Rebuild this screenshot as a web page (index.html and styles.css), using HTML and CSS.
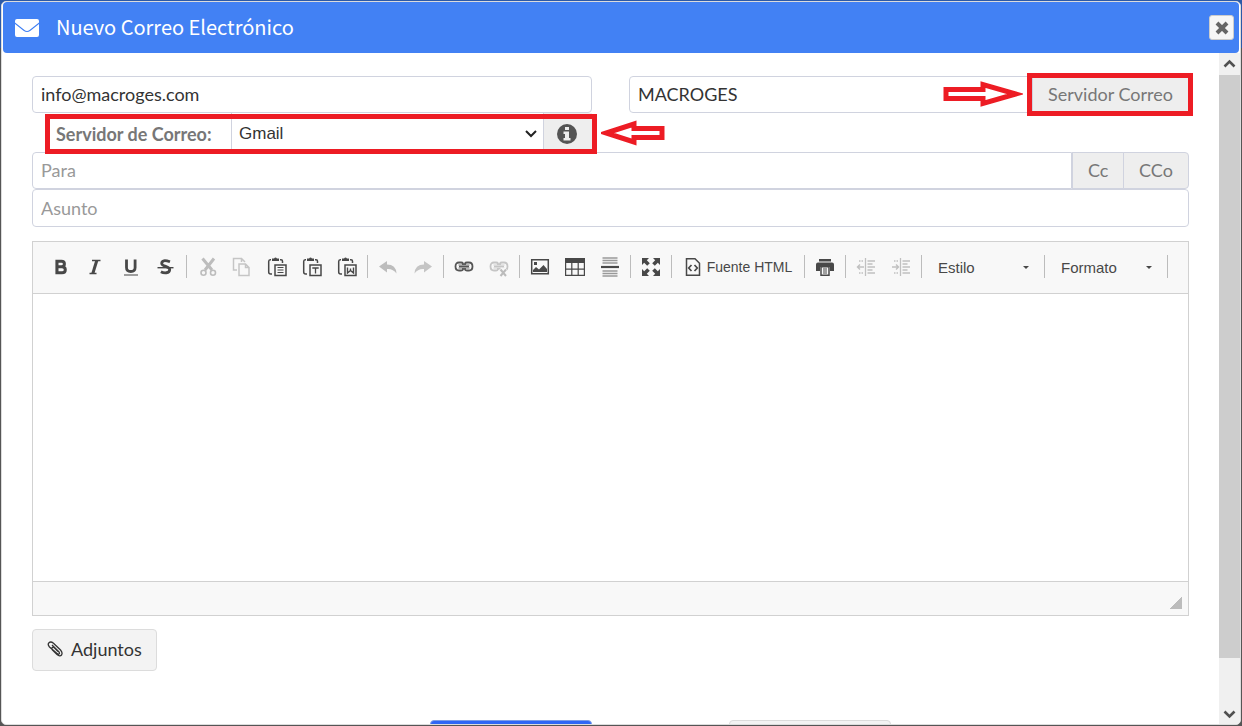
FILE: index.html
```html
<!DOCTYPE html>
<html lang="es">
<head>
<meta charset="utf-8">
<meta name="viewport" content="width=device-width, initial-scale=1">
<title>Nuevo Correo Electrónico</title>
<link rel="stylesheet" href="styles.css">
</head>
<body>
<main class="dialog">
  <header class="titlebar">
    <svg class="mail-icon" viewBox="0 0 24 20" aria-hidden="true"><path fill="#fff" d="M2 1h20q2 0 2 2v1.500L14.500 12q-2.500 1.800-5 0L0 4.500V3q0-2 2-2zM0 6l8.500 6.800q3.500 2.400 7 0L24 6v11q0 2-2 2H2q-2 0-2-2z"/></svg>
    <h1 class="title">Nuevo Correo Electrónico</h1>
    <button class="close" type="button" aria-label="Cerrar"><svg viewBox="0 0 12 12" width="14" height="14"><path d="M1.700 1.700l8.600 8.600M10.300 1.700l-8.600 8.600" stroke="#666" stroke-width="3.400"/></svg></button>
  </header>
  <div class="body">
    <form class="content">
      <div class="senders">
        <input class="field" type="text" aria-label="Remitente" value="info@macroges.com">
        <div class="group">
          <input class="field joined" type="text" aria-label="Nombre" value="MACROGES">
          <button class="addon" type="button">Servidor Correo</button>
          <span class="mark mark-button"></span>
          <svg class="arrow arrow-right" viewBox="0 0 80 28" aria-hidden="true"><path d="M3 9.500h37V4.500L73 14 40 23.500V18.500H3z"/></svg>
        </div>
        <div class="server">
          <label class="server-label" for="server">Servidor de Correo:</label>
          <div class="select-box">
            <select class="server-select" id="server"><option>Gmail</option></select>
            <svg class="chevron" viewBox="0 0 12 8" aria-hidden="true"><path d="M1 1l5 5 5-5" fill="none" stroke="#222" stroke-width="2"/></svg>
          </div>
          <button class="info" type="button" aria-label="Información"><svg viewBox="0 0 20 20" width="20" height="20"><circle cx="10" cy="10" r="10" fill="#555"/><path fill="#eee" d="M8 3h4v3H8zM6.500 7.500H12v6.500h1.500v2.500h-7V14H8v-4H6.500z"/></svg></button>
          <span class="mark mark-server"></span>
          <svg class="arrow arrow-left" viewBox="0 0 64 28" aria-hidden="true"><path d="M61 9.500H33V5L5 14l28 9v-4.500h28z"/></svg>
        </div>
      </div>
      <div class="group">
        <input class="field joined" type="text" aria-label="Para" placeholder="Para">
        <button class="addon cc" type="button">Cc</button>
        <button class="addon cco" type="button">CCo</button>
      </div>
      <input class="field subject" type="text" aria-label="Asunto" placeholder="Asunto">

      <section class="editor">
        <div class="toolbar" role="toolbar" aria-label="Formato de texto">
          <button class="tool" type="button" aria-label="Negrita"><svg viewBox="0 0 20 20"><path fill="none" stroke="#484848" stroke-width="3" d="M5.900 4.300h4.500q3 0 3 2.600t-3 2.900H6h5q3.300 0 3.300 3t-3.300 3H5.900zM6 3v14"/></svg></button>
          <button class="tool" type="button" aria-label="Cursiva"><svg viewBox="0 0 20 20"><path fill="none" stroke="#484848" stroke-width="1.700" d="M6 3.500h8.500M3.500 16.500h7"/><path stroke="#484848" stroke-width="3" d="M10.800 3.500L6.800 16.500"/></svg></button>
          <button class="tool" type="button" aria-label="Subrayado"><svg viewBox="0 0 20 20"><path fill="none" stroke="#484848" stroke-width="2.800" d="M5.500 2.500v8q0 4 4.300 4t4.300-4v-8"/><path stroke="#777" stroke-width="1.400" d="M3 18h14"/></svg></button>
          <button class="tool" type="button" aria-label="Tachado"><svg viewBox="0 0 20 20"><path fill="none" stroke="#484848" stroke-width="2.800" d="M14 4.800Q6 2 5.700 6.300c-.2 3.500 8 2.700 8 6.200 0 4.200-6 3.700-8.800 2.200"/><path stroke="#484848" stroke-width="1.400" d="M1.500 10.700h16"/></svg></button>
          <span class="sep"></span>
          <button class="tool" type="button" aria-label="Cortar"><svg viewBox="0 0 20 20" fill="none" stroke="#bdbdbd"><path stroke-width="3" d="M5.500 1.500L15 13M17 1.500L8 13"/><circle cx="6.500" cy="15.700" r="2.500" stroke-width="1.600"/><circle cx="16" cy="15.700" r="2.500" stroke-width="1.600"/></svg></button>
          <button class="tool" type="button" aria-label="Copiar"><svg viewBox="0 0 20 20" fill="none" stroke="#c5c5c5" stroke-width="1.500"><path d="M5 13H1.500V1.500h8L13 5M9.500 1.500V5"/><path d="M7 7h6.500L17 10.500V18.500H7zM13.500 7v3.500H17"/></svg></button>
          <button class="tool" type="button" aria-label="Pegar"><svg viewBox="0 0 20 20"><use href="#board"/><path stroke="#484848" stroke-width="1.200" d="M10.500 10.500h6M10.500 13h6M10.500 15.500h6"/></svg></button>
          <button class="tool" type="button" aria-label="Pegar como texto plano"><svg viewBox="0 0 20 20"><use href="#board"/><path fill="none" stroke="#484848" stroke-width="1.300" d="M10.300 11h6.400M13.500 11v5.500"/></svg></button>
          <button class="tool" type="button" aria-label="Pegar desde Word"><svg viewBox="0 0 20 20"><use href="#board"/><path fill="none" stroke="#484848" stroke-width="1.400" d="M10.500 10.500V16l3-2.500 3 2.500v-5.500M13.500 11.500v2"/></svg></button>
          <span class="sep"></span>
          <button class="tool" type="button" aria-label="Deshacer"><svg viewBox="0 0 20 20"><path fill="#bdbdbd" d="M1 9.500L9 4v3.500q9 0 9.500 9Q15 11.500 9 12v3.500z"/></svg></button>
          <button class="tool" type="button" aria-label="Rehacer"><svg viewBox="0 0 20 20"><path fill="#c5c5c5" d="M19 9.500L11 4v3.500q-9 0-9.500 9Q5 11.500 11 12v3.500z"/></svg></button>
          <span class="sep"></span>
          <button class="tool" type="button" aria-label="Vínculo"><svg viewBox="0 0 20 20" fill="none"><use href="#chain" stroke="#555"/></svg></button>
          <button class="tool" type="button" aria-label="Eliminar vínculo"><svg viewBox="0 0 20 20" fill="none"><use href="#chain" stroke="#c5c5c5"/><path stroke="#f8f8f8" stroke-width="5" d="M11 12l6 7M17 12l-6 7"/><path stroke="#bbb" stroke-width="2" d="M11.500 12.500l5.500 6.500M17 12.500l-5.500 6.500"/></svg></button>
          <span class="sep"></span>
          <button class="tool" type="button" aria-label="Imagen"><svg viewBox="0 0 20 20"><path fill="none" stroke="#484848" stroke-width="1.500" d="M1.700 2.700h16.600v14H1.700z"/><path fill="#484848" d="M3 15v-2l3-3 3 2.500L13.500 8l3.500 4v3zM4 5h3v3H4z"/></svg></button>
          <button class="tool" type="button" aria-label="Tabla"><svg viewBox="0 0 20 20"><path fill="#484848" d="M0 1h20v5H0z"/><path fill="none" stroke="#484848" stroke-width="1.200" d="M.6 5v13.400h18.800V5M0 12.200h20M6.800 6v12M13.200 6v12"/></svg></button>
          <button class="tool" type="button" aria-label="Línea horizontal"><svg viewBox="0 0 20 20"><path stroke="#999" stroke-width="1.300" d="M2.500 1h15M2.500 3.500h15M2.500 6h15M2.500 14h15M2.500 16.500h15M2.500 19h15"/><path stroke="#484848" stroke-width="2.200" d="M1 10h18"/></svg></button>
          <span class="sep"></span>
          <button class="tool" type="button" aria-label="Maximizar"><svg viewBox="0 0 20 20"><path fill="#484848" d="M1 1h7L5.800 3.200l3 3-2.600 2.600-3-3L1 8zM19 1v7l-2.200-2.200-3 3-2.600-2.600 3-3L12 1zM1 19v-7l2.200 2.200 3-3 2.600 2.600-3 3L8 19zM19 19h-7l2.200-2.200-3-3 2.600-2.600 3 3L19 12z"/></svg></button>
          <span class="sep"></span>
          <button class="tool source" type="button"><svg viewBox="0 0 20 20" fill="none" stroke="#484848"><path stroke-width="1.500" d="M3.500 1.700h8.500l4.500 4.500v12.100h-13z"/><path stroke-width="1.700" d="M8.500 8L5.700 11l2.800 3M11.500 8l2.800 3-2.800 3"/></svg>Fuente HTML</button>
          <span class="sep"></span>
          <button class="tool" type="button" aria-label="Imprimir"><svg viewBox="0 0 20 20"><path fill="#484848" d="M4 2h12v2.500H4zM3 5.500h14q2 0 2 2V14h-4v-4H5v4H1V7.500q0-2 2-2z"/><path fill="none" stroke="#484848" stroke-width="1.500" d="M6 9.700h8v8.500H6z"/><path stroke="#484848" d="M8 12h4M8 14h4M8 16h4"/></svg></button>
          <span class="sep"></span>
          <button class="tool" type="button" aria-label="Reducir sangría"><svg viewBox="0 0 20 20" fill="none" stroke="#c0c0c0"><use href="#lines"/><path stroke-width="1.400" d="M1.500 10H8M4 7.500L1.500 10 4 12.500"/></svg></button>
          <button class="tool" type="button" aria-label="Aumentar sangría"><svg viewBox="0 0 20 20" fill="none" stroke="#c0c0c0"><use href="#lines"/><path stroke-width="1.400" d="M1 10h6.500M5 7.500L7.500 10 5 12.500"/></svg></button>
          <span class="sep"></span>
          <button class="tool combo" type="button">Estilo<span class="caret"></span></button>
          <span class="sep"></span>
          <button class="tool combo" type="button">Formato<span class="caret"></span></button>
          <span class="sep"></span>
        </div>
        <textarea class="message" aria-label="Mensaje"></textarea>
        <div class="statusbar"><span class="grip"></span></div>
      </section>

      <button class="attach" type="button"><svg viewBox="0 0 16 16" width="16" height="16" fill="none" stroke="#333" stroke-width="1.300"><path d="M5 4l7 7q1 1.500 0 2-1 .5-2-.5L2.500 6Q.2 3.300 2 1.700t4.500.5L13.500 9q2.500 3 1 5t-4.500-.5L5.500 9q-1.200-1.600-.2-2.500 1-.8 2.300.5L11 10.500"/></svg>Adjuntos</button>

      <div class="actions">
        <button class="action primary" type="button" aria-label="Enviar"></button>
        <button class="action" type="button" aria-label="Cancelar"></button>
      </div>
    </form>
    <div class="scrollbar" aria-hidden="true">
      <svg class="scroll-arrow" viewBox="0 0 21 22"><path d="M5.500 13.500l5-5 5 5" fill="none" stroke="#505050" stroke-width="2.600"/></svg>
      <div class="track"><div class="thumb"></div></div>
      <svg class="scroll-arrow" viewBox="0 0 21 22"><path d="M5.500 9.500l5 5 5-5" fill="none" stroke="#505050" stroke-width="2.600"/></svg>
    </div>
  </div>
</main>
<svg class="defs" aria-hidden="true">
  <defs>
    <g id="board" fill="none" stroke="#484848">
      <path stroke-width="1.500" d="M4 2.700H3.200Q1.700 2.700 1.700 4.500V15q0 2 2 2H5M13 2.700h1q1.500 0 1.500 1.500V6"/>
      <path fill="#484848" stroke="none" d="M5 1.500h2Q8.500-.5 10 1.500h2V4H5z"/>
      <path stroke-width="1.500" d="M8 8h11v10.500H8z"/>
    </g>
    <g id="chain">
      <path stroke-width="1.800" d="M9 8V6.500q-.5-1-2-1H5q-3.500 0-3.500 4t3.500 4h2q1.500 0 2-1V11M11 8V6.500q.5-1 2-1h2q3.500 0 3.500 4t-3.500 4h-2q-1.500 0-2-1V11"/>
      <path stroke-width="1.600" d="M5 9.500h10"/>
      <path stroke-width=".8" d="M4.500 8h11M4.500 11h11"/>
    </g>
    <g id="lines">
      <path stroke-width="1.300" d="M9.500 1v18"/>
      <path stroke-width="1.300" d="M11.500 4H19M11.500 7h5M11.500 10H19M11.500 13h5M11.500 16H19"/>
      <path stroke-width="1.300" stroke-dasharray="1.500 1" d="M3 4h5M3 16h5"/>
    </g>
  </defs>
</svg>
</body>
</html>
```
FILE: styles.css
```css
* { box-sizing: border-box; }

body {
  margin: 0;
  height: 100vh;
  padding: 1px;
  background: linear-gradient(#2c5aa8 48px, #555 48px);
  font-family: Lato, sans-serif;
  font-size: 18px;
  color: #333;
}

button, input, select, textarea { font: inherit; color: inherit; margin: 0; }

.defs { position: absolute; width: 0; height: 0; }

.dialog {
  display: flex;
  flex-direction: column;
  height: 100%;
  background: #fff;
  border: 1px solid #dcdcdc;
  border-radius: 5px;
  overflow: hidden;
}

.titlebar {
  display: flex;
  align-items: center;
  flex: none;
  height: 51px;
  margin: 0 1px;
  padding: 0 5px 0 12px;
  background: #4281f4;
  border-radius: 4px;
}

.mail-icon { width: 24px; height: 20px; margin-right: 17px; }

.title {
  flex: 1;
  margin: 0;
  padding-bottom: 2px;
  font: 400 20px/32px "Noto Sans CJK SC", "Noto Sans", sans-serif;
  color: #fff;
}

.close {
  display: grid;
  place-items: center;
  width: 25px;
  height: 25px;
  padding: 0;
  background: #f6f6f6;
  border: 1px solid #ccc;
  border-radius: 3px;
}

.body { display: flex; flex: 1; min-height: 0; }

.content {
  flex: 1;
  min-width: 0;
  padding: 23px 30px 0;
  overflow: hidden;
}

.senders {
  display: grid;
  grid-template-columns: 1fr 1fr;
  column-gap: 37px;
}

.group { position: relative; display: flex; }

.field {
  width: 100%;
  min-width: 0;
  height: 37px;
  padding: 0 8px 2px;
  border: 1px solid #d0d3df;
  border-radius: 4px;
  background: #fff;
}

.field::placeholder { color: #999; opacity: 1; }
.joined { flex: 1; border-radius: 4px 0 0 4px; }
.subject { display: block; height: 38px; padding-bottom: 0; }

.addon {
  padding: 0 15px 2px;
  background: #eee;
  border: 1px solid #d0d3df;
  color: #777;
}

.cc { width: 52px; }
.cco { width: 66px; margin-left: -1px; border-radius: 0 4px 4px 0; }

.server {
  position: relative;
  display: flex;
  height: 39px;
  margin-left: 13px;
}

.server-label {
  width: 186px;
  padding-left: 11px;
  font-weight: 700;
  line-height: 42px;
  color: #777;
}

.select-box {
  position: relative;
  flex: 1;
  border: solid #d0d3df;
  border-width: 0 1px;
}

.server-select {
  width: 100%;
  height: 100%;
  padding: 2px 7px 0;
  appearance: none;
  background: #fff;
  border: 0;
  font-family: "Liberation Sans", sans-serif;
  font-size: 17px;
}

.chevron { position: absolute; right: 6px; top: 17px; width: 12px; height: 8px; }

.info {
  display: grid;
  place-items: center;
  width: 48px;
  padding: 2px 3px 0 0;
  background: #eee;
  border: 0;
}

.mark { position: absolute; z-index: 1; border: 5px solid #ed1c24; pointer-events: none; }
.mark-button { right: -4px; top: -3px; bottom: -3px; width: 166px; }
.mark-server { inset: 1px -5px -2px 0; }

.arrow { position: absolute; height: 28px; fill: #fff; stroke: #ed1c24; stroke-width: 5px; }
.arrow-right { right: 166px; top: 4px; width: 80px; }
.arrow-left { left: 100%; margin-left: 9px; top: 6px; width: 64px; }

.editor { margin-top: 14px; border: 1px solid #d1d1d1; }

.toolbar {
  display: flex;
  flex-wrap: wrap;
  align-items: center;
  min-height: 52px;
  padding: 0 0 2px 10px;
  background: #f8f8f8;
  border-bottom: 1px solid #d1d1d1;
}

.tool {
  display: flex;
  align-items: center;
  justify-content: center;
  width: 35px;
  height: 32px;
  padding: 0;
  background: none;
  border: 0;
  font-family: "Liberation Sans", sans-serif;
  font-size: 15px;
  color: #484848;
}

.tool svg { width: 20px; height: 20px; }
.sep { width: 1px; height: 23px; margin: 0 2px 0 3px; background: #bcbcbc; }
.source { width: 127px; gap: 4px; padding-top: 1px; font-size: 14px; }
.combo { width: 117px; padding: 1px 12px 0 14px; justify-content: space-between; }

.caret {
  border: solid transparent;
  border-width: 3px 3px 0;
  border-top-color: #484848;
}

.message {
  display: block;
  width: 100%;
  height: 287px;
  padding: 20px;
  border: 0;
  resize: none;
}

.statusbar {
  display: flex;
  justify-content: flex-end;
  align-items: flex-end;
  height: 34px;
  padding: 6px;
  background: #f8f8f8;
  border-top: 1px solid #d1d1d1;
}

.grip {
  width: 12px;
  height: 12px;
  background: linear-gradient(135deg, transparent 50%, #bcbcbc 50%);
}

.attach {
  display: flex;
  align-items: center;
  gap: 8px;
  height: 42px;
  margin-top: 13px;
  padding: 0 14px 2px;
  background: #f3f3f3;
  border: 1px solid #dcdcdc;
  border-radius: 4px;
}

.actions {
  display: flex;
  justify-content: center;
  gap: 137px;
  margin-top: 49px;
  padding-left: 99px;
}

.action {
  width: 162px;
  height: 42px;
  background: #f3f3f3;
  border: 1px solid #dcdcdc;
  border-radius: 4px;
}

.primary { background: #2f66f5; border-color: #7d9de8; }

.scrollbar { display: flex; flex-direction: column; width: 21px; background: #f0f0f0; }
.scroll-arrow { width: 21px; height: 22px; }
.track { flex: 1; }
.thumb { height: 93%; background: #cdcdcd; }
```
